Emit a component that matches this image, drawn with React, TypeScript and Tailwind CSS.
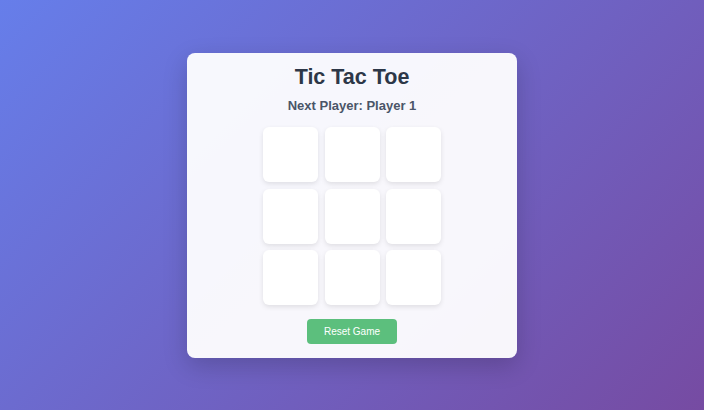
import React, { useState } from 'react';

const App = () => {
  const [cells, setCells] = useState<(string | null)[]>(Array(9).fill(null));
  const [xNext, setXNext] = useState(true);

  const play = (i: number) => {
    if (cells[i]) return;
    const next = cells.slice();
    next[i] = xNext ? 'X' : 'O';
    setCells(next);
    setXNext(!xNext);
  };

  return (
    <div className="w-[704px] h-[410px] flex items-center justify-center bg-[linear-gradient(135deg,#667eea_0%,#764ba2_100%)] font-['Liberation_Sans',Arial,sans-serif]">
      <div className="w-[330px] h-[305px] bg-white/95 rounded-lg shadow-[0_8px_24px_rgba(0,0,0,0.18)] px-5 pt-[14.5px] flex flex-col items-center">
        <h1 className="text-[21.5px] leading-[21.5px] font-bold text-[#2d3748]">Tic Tac Toe</h1>
        <div className="mt-[10.3px] text-[13px] leading-[13px] font-bold text-[#4a5568]">
          Next Player: {xNext ? 'Player 1' : 'Player 2'}
        </div>
        <div className="mt-[15.7px] grid grid-cols-[repeat(3,55px)] gap-[6.5px]">
          {cells.map((c, i) => (
            <button
              key={i}
              onClick={() => play(i)}
              className="w-[55px] h-[55px] bg-white rounded-md shadow-[0_2px_5px_rgba(0,0,0,0.1)] text-2xl font-bold text-[#2d3748]"
            >
              {c}
            </button>
          ))}
        </div>
        <button
          onClick={() => { setCells(Array(9).fill(null)); setXNext(true); }}
          className="mt-[14px] w-[90px] h-[25px] rounded bg-[#5cbf7d] text-white text-[10px]"
        >
          Reset Game
        </button>
      </div>
    </div>
  );
};

export default App;
